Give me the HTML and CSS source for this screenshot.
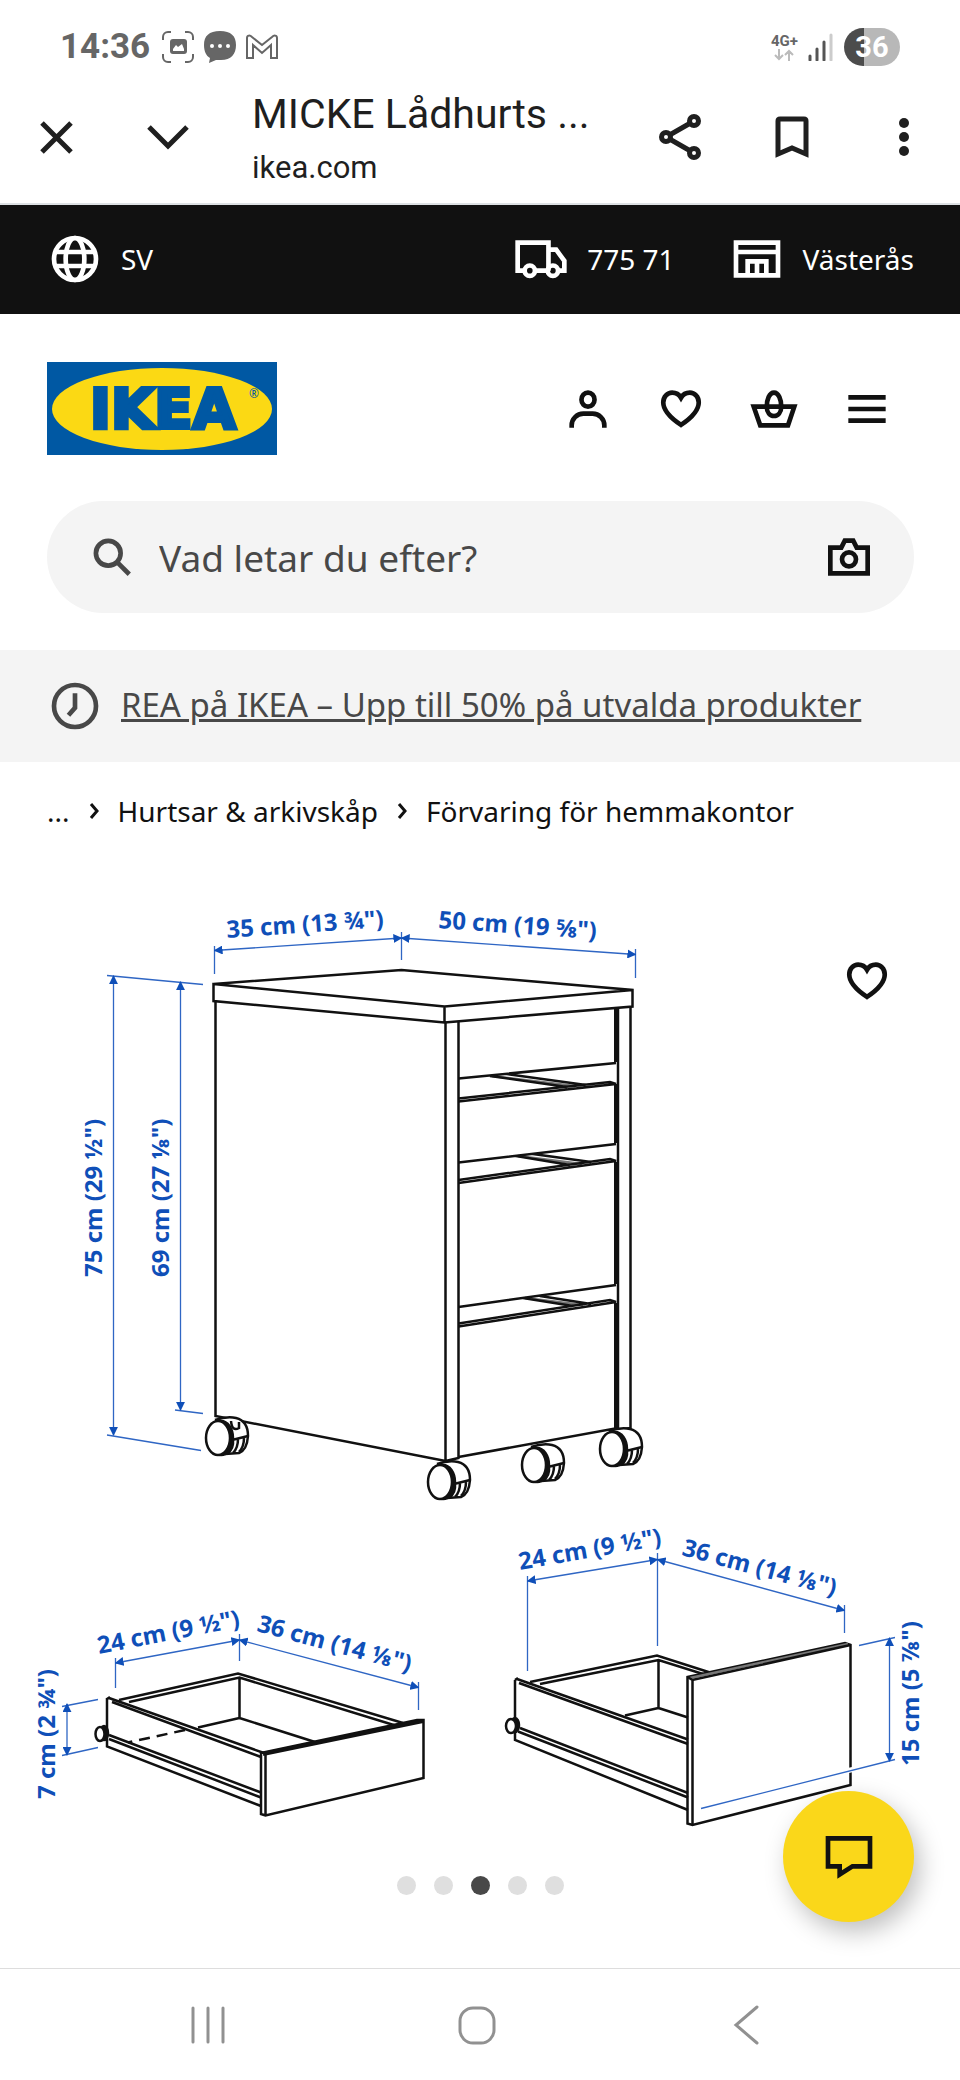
FILE: index.html
```html
<!DOCTYPE html>
<html lang="sv">
<head>
<meta charset="UTF-8">
<meta name="viewport" content="width=device-width, initial-scale=1.0">
<title>MICKE Lådhurts - IKEA</title>
<link rel="stylesheet" href="styles.css">
</head>
<body>
<div class="status-bar">
  <span class="clock">14:36</span>
  <svg class="status-icon" viewBox="0 0 32 32">
    <path class="frame" d="M1 9V6a5 5 0 0 1 5-5h3M23 1h3a5 5 0 0 1 5 5v3M31 23v3a5 5 0 0 1-5 5h-3M9 31H6a5 5 0 0 1-5-5v-3"/>
    <rect x="8" y="8" width="17" height="15" rx="3"/>
    <path class="hill" d="M11 20v-2l3-4 2 2 4-3 2 5v2z"/>
  </svg>
  <svg class="status-icon" viewBox="0 0 32 32">
    <path d="M16 0C27 0 32 5 32 14s-5 15-15 15h-5l-7 3 1-5C2 25 0 20 0 14 0 5 5 0 16 0z"/>
    <g fill="#fff"><circle cx="8" cy="15" r="2"/><circle cx="16" cy="15" r="2"/><circle cx="24" cy="15" r="2"/></g>
  </svg>
  <svg class="status-icon" viewBox="0 0 32 32">
    <path class="frame" d="M1 26V7c0-3 3-3 5-1l10 8 10-8c2-2 5-2 5 1v20h-6V14l-9 8-9-8v13H1z"/>
  </svg>
  <div class="network">
    <span>4G+</span>
    <svg viewBox="0 0 20 12"><path d="M5 0v10M1 6l4 4 4-4M15 12V2M11 6l4-4 4 4"/></svg>
  </div>
  <svg class="signal" viewBox="0 0 26 28">
    <path d="M2 27v-4M9 27V16M16 27V9"/><path class="weak" d="M23 27V2"/>
  </svg>
  <span class="battery">36</span>
</div>

<div class="browser-bar">
  <button class="icon-btn" aria-label="Stäng">
    <svg viewBox="0 0 56 56"><path d="M14 14l29 29M43 14L14 43"/></svg>
  </button>
  <button class="icon-btn" aria-label="Minimera">
    <svg viewBox="0 0 56 56"><path d="M9 18l19 19 19-19"/></svg>
  </button>
  <div class="page-info">
    <div class="page-title">MICKE Lådhurts ...</div>
    <div class="page-host">ikea.com</div>
  </div>
  <button class="icon-btn" aria-label="Dela">
    <svg viewBox="0 0 56 56"><path d="M42 12L14 28l28 16"/><g fill="#fff"><circle cx="42" cy="12" r="4.500"/><circle cx="14" cy="28" r="4.500"/><circle cx="42" cy="44" r="4.500"/></g></svg>
  </button>
  <button class="icon-btn" aria-label="Bokmärke">
    <svg viewBox="0 0 56 56"><path d="M14 45V12q0-2 2-2h24q2 0 2 2v33l-14-6z"/></svg>
  </button>
  <button class="icon-btn" aria-label="Meny">
    <svg class="solid" viewBox="0 0 56 56"><circle cx="28" cy="14" r="5"/><circle cx="28" cy="28" r="5"/><circle cx="28" cy="42" r="5"/></svg>
  </button>
</div>

<nav class="top-bar">
  <a href="#" class="top-link">
    <svg class="icon" viewBox="0 0 24 24"><circle cx="12" cy="12" r="9"/><ellipse cx="12" cy="12" rx="4" ry="9"/><path d="M4 9h16M4 15h16"/></svg>
    SV
  </a>
  <a href="#" class="top-link postcode">
    <svg class="icon" viewBox="0 0 24 24"><path d="M5 17H2V5h13.200v12M9.500 17h5.500M15.200 8h3.300l3.500 4.800V17h-2.500"/><circle cx="7.200" cy="17" r="2.200"/><circle cx="17.100" cy="17" r="2.200"/></svg>
    775 71
  </a>
  <a href="#" class="top-link">
    <svg class="icon" viewBox="0 0 24 24"><path d="M3 5h18v14H3zM3 9h18M8 19v-6h8v6M12 13v6"/></svg>
    Västerås
  </a>
</nav>

<header class="header">
  <div class="header-row">
    <a href="#" class="logo" aria-label="IKEA">
      <svg viewBox="0 0 230 93">
        <rect width="230" height="93" fill="#0058a3"/>
        <ellipse cx="115" cy="47" rx="110" ry="41" fill="#fbd914"/>
        <text class="logo-text" x="116" y="66" text-anchor="middle">IKEA</text>
        <text class="logo-mark" x="202" y="36">®</text>
      </svg>
    </a>
    <div class="header-icons">
      <button class="icon-btn" aria-label="Logga in">
        <svg class="icon" viewBox="0 0 24 24"><ellipse cx="12" cy="8" rx="2.800" ry="3"/><path d="M5 20v-1a5 5 0 0 1 5-5h4a5 5 0 0 1 5 5v1"/></svg>
      </button>
      <button class="icon-btn" aria-label="Favoriter">
        <svg class="icon" viewBox="0 0 24 24"><path d="M12 18.800C9 16.800 4.400 13 4.400 9.200 4.400 6.800 6.200 5 8.200 5c1.700 0 3 .8 3.800 2.200C12.800 5.800 14.100 5 15.800 5c2 0 3.800 1.800 3.800 4.200 0 3.800-4.600 7.600-7.600 9.600z"/></svg>
      </button>
      <button class="icon-btn" aria-label="Varukorg">
        <svg class="icon" viewBox="0 0 24 24"><path d="M3.300 11h17.400l-2.700 8H6.100z"/><path d="M12 5c2 0 3.100 3 3.100 6 0 2.500-1.400 4-3.100 4s-3.100-1.500-3.100-4c0-3 1.100-6 3.100-6z"/></svg>
      </button>
      <button class="icon-btn" aria-label="Meny">
        <svg class="icon" viewBox="0 0 24 24"><path d="M4 7h16M4 12h16M4 17h16"/></svg>
      </button>
    </div>
  </div>
  <form class="search">
    <svg class="icon" viewBox="0 0 24 24"><circle cx="10.400" cy="10.400" r="5.300"/><path d="M14.200 14.200l5.200 5.200"/></svg>
    <input type="text" placeholder="Vad letar du efter?" aria-label="Sök">
    <button type="button" class="icon-btn" aria-label="Sök med bild">
      <svg class="icon" viewBox="0 0 24 24"><path d="M4 19V8h4.700l1.500-3h3.600l1.500 3H20v11z"/><circle cx="12" cy="13" r="3"/></svg>
    </button>
  </form>
</header>

<div class="banner">
  <svg class="icon" viewBox="0 0 24 24"><circle cx="12" cy="12" r="9"/><path d="M12 6.500v6.300L9.200 16"/></svg>
  <a href="#">REA på IKEA – Upp till 50% på utvalda produkter</a>
</div>

<nav class="breadcrumb">
  <a href="#">...</a>
  <svg viewBox="0 0 10 16"><path d="M2 1l6 7-6 7"/></svg>
  <a href="#">Hurtsar &amp; arkivskåp</a>
  <svg viewBox="0 0 10 16"><path d="M2 1l6 7-6 7"/></svg>
  <a href="#">Förvaring för hemmakontor</a>
</nav>

<main class="gallery">
  <svg class="drawing" viewBox="0 850 960 1000" role="img" aria-label="Måttskiss">
    <defs>
      <marker id="arrow" viewBox="0 0 10 10" refX="9" refY="5" markerWidth="9" markerHeight="9" markerUnits="userSpaceOnUse" orient="auto-start-reverse">
        <path class="arrow" d="M0 0l10 5-10 5z"/>
      </marker>
      <g id="caster">
        <path d="M-4 -18Q8 -22 17 -20 29 -17 29 -2 28 12 20 15L6 16"/>
        <path d="M13 2L29 -2M14 2Q15 11 8 16M19 1Q19 10 14 15M25 0Q25 9 20 14"/>
        <ellipse cx="2" cy="0" rx="12" ry="17" fill="#111"/>
        <ellipse cx="-1" cy="0" rx="12" ry="17"/>
      </g>
    </defs>

    <!-- cabinet -->
    <g class="outline">
      <path d="M215.500 1001V1416L445.500 1461V1022M458.500 1021V1458L445.500 1461M630.500 1007V1428L617.500 1430M458.500 1457L618 1428V1008"/>
      <path d="M213.500 984L401.500 970 632.500 990V1006.500L444.500 1022.500 213.500 1001ZL444.500 1006.500 632.500 990M444.500 1006.500V1022.500"/>
      <path class="shade" d="M492 1076L575 1086M518 1156L582 1164M525 1298L583 1305"/>
      <path d="M458.500 1078.500L616 1063M458.500 1098.500L610 1082 616 1084 458.500 1101.500M490 1076L567 1087M507 1074L586 1085"/>
      <path d="M458.500 1162.500L616 1144M458.500 1180L610 1159 616 1161 458.500 1183M516 1156L570 1165M533 1154L591 1162"/>
      <path d="M458.500 1307L616 1285M458.500 1323.500L610 1300 616 1302 458.500 1326.500M523 1298L573 1306M540 1296L591 1304"/>
      <path class="thick" d="M616 1008V1062M616 1084V1143M616 1162V1284M616 1303V1428"/>
      <use href="#caster" x="219" y="1438"/>
      <path d="M231 1421Q232 1432 239 1428V1422"/>
      <use href="#caster" x="441" y="1482"/>
      <use href="#caster" x="535" y="1465"/>
      <use href="#caster" x="613" y="1449"/>
    </g>

    <!-- small drawer -->
    <g class="outline">
      <path d="M107 1698V1746.500L261 1806M109 1698L264 1753M112 1702L261 1757M107 1699L110 1697"/>
      <path d="M119 1700L238 1673.500 403 1723M129 1702L239.500 1677.500 397 1726M239.500 1677V1718L198 1727.500M239.500 1718L315 1742"/>
      <path stroke-dasharray="11 7" d="M185 1730L128 1742.500"/>
      <path d="M109 1735L261 1792.500M109 1739L261 1797.500"/>
      <path d="M261 1753L417 1720H423.500V1778L265.500 1815.500 261 1814ZM265.500 1755V1815"/>
      <path class="thick" d="M263 1754L423 1721"/>
      <ellipse cx="104" cy="1733" rx="4" ry="7" fill="#111"/>
      <ellipse cx="100" cy="1734" rx="4.500" ry="7"/>
    </g>

    <!-- large drawer -->
    <g class="outline">
      <path d="M515 1680V1740L688 1810M517 1679L688 1739.500M519 1683L688 1744M515 1680L518 1678"/>
      <path d="M530 1682L657 1655.500 710 1672.500M540 1684L658.500 1660 703 1674M658.500 1660V1708L625 1715.500M658.500 1708L688 1717.500"/>
      <path d="M520 1728L688 1793M518 1731.500L688 1797.500"/>
      <path d="M687.500 1677L845 1643 850.500 1645V1785L692.500 1825 687.500 1823.500Z"/>
      <path class="shade" d="M690 1678L848 1644"/>
      <path d="M687.500 1677L692.500 1680 850.500 1645M692.500 1680V1825"/>
      <ellipse cx="515" cy="1725" rx="4" ry="7" fill="#111"/>
      <ellipse cx="511" cy="1726" rx="5" ry="7"/>
      <path class="gap" d="M846 1771L855 1769"/>
    </g>

    <!-- measure lines -->
    <g class="measure">
      <path d="M214.500 946V974M401.500 932V960M635.500 949V978M107 975.500L203 984.500M175 1410L203 1413.500M107 1435L201 1450.500"/>
      <path d="M115.500 1658V1688M239.500 1634V1661M418.500 1682V1710M62 1706.500L98 1699.500M62 1755.500L98 1747.500"/>
      <path d="M527.500 1576V1671M657.500 1553V1646M844.500 1605V1633M859 1645.500L895 1637.500M701 1808.500L895 1759.500"/>
      <g class="ends">
        <path d="M214.500 950.500L401.500 938"/><path d="M401.500 938L635.500 954.500"/>
        <path d="M113.500 976V1435"/><path d="M180.500 982V1410"/>
        <path d="M115.500 1663L239.500 1640"/><path d="M239.500 1640L418.500 1687.500"/><path d="M67 1704V1755"/>
        <path d="M527.500 1581L657.500 1559.500"/><path d="M657.500 1559.500L844.500 1610.500"/><path d="M889.500 1638V1761"/>
      </g>
    </g>
    <g class="labels">
      <text transform="translate(227 938) rotate(-4)">35 cm (13 ¾")</text>
      <text transform="translate(438 928) rotate(4)">50 cm (19 ⅝")</text>
      <text transform="translate(102 1277) rotate(-90)">75 cm (29 ½")</text>
      <text transform="translate(169 1277) rotate(-90)">69 cm (27 ⅛")</text>
      <text transform="translate(99 1654) rotate(-11)">24 cm (9 ½")</text>
      <text transform="translate(256 1631) rotate(15)">36 cm (14 ⅛")</text>
      <text transform="translate(55 1799) rotate(-90)">7 cm (2 ¾")</text>
      <text transform="translate(520 1570) rotate(-10)">24 cm (9 ½")</text>
      <text transform="translate(681 1555) rotate(15)">36 cm (14 ⅛")</text>
      <text transform="translate(919 1766) rotate(-90)">15 cm (5 ⅞")</text>
    </g>
  </svg>
  <button class="icon-btn favourite" aria-label="Spara som favorit">
    <svg class="icon" viewBox="0 0 24 24"><path d="M12 18.800C9 16.800 4.400 13 4.400 9.200 4.400 6.800 6.200 5 8.200 5c1.700 0 3 .8 3.800 2.200C12.800 5.800 14.100 5 15.800 5c2 0 3.800 1.800 3.800 4.200 0 3.800-4.600 7.600-7.600 9.600z"/></svg>
  </button>
  <div class="dots">
    <span class="dot"></span>
    <span class="dot"></span>
    <span class="dot active"></span>
    <span class="dot"></span>
    <span class="dot"></span>
  </div>
  <button class="chat-btn" aria-label="Chatt">
    <svg class="icon" viewBox="0 0 24 24"><path d="M3 4h18v12h-7.500L8 19.500V16H3z"/></svg>
  </button>
</main>

<div class="system-nav">
  <button aria-label="Senaste appar"><svg viewBox="0 0 40 40"><path d="M5 3v34M20 3v34M35 3v34"/></svg></button>
  <button aria-label="Hem"><svg viewBox="0 0 40 40"><rect x="3" y="3" width="34" height="35" rx="13"/></svg></button>
  <button aria-label="Tillbaka"><svg viewBox="0 0 40 40"><path d="M31 2L10 20l21 18"/></svg></button>
</div>
</body>
</html>
```

FILE: styles.css
```css
* {
  box-sizing: border-box;
}
body {
  margin: 0;
  background-color: #fff;
  color: #111;
  font-family: "Noto Sans", sans-serif;
  font-size: 28px;
}
a {
  color: inherit;
  text-decoration: none;
}
button {
  padding: 0;
  border: none;
  background: none;
  color: inherit;
  cursor: pointer;
}
svg {
  display: block;
  flex: none;
}

/* icons */
.icon {
  width: 56px;
  height: 56px;
  fill: none;
  stroke: currentColor;
  stroke-width: 2;
}
.icon-btn {
  flex: none;
  width: 56px;
  height: 56px;
}

/* status bar */
.status-bar {
  display: flex;
  align-items: center;
  gap: 10px;
  height: 71px;
  padding: 22px 60px 0 60px;
  color: #666;
  font-family: Roboto, sans-serif;
  font-weight: bold;
}
.clock {
  margin-right: 2px;
  font-size: 35px;
}
.status-icon {
  width: 32px;
  height: 32px;
  fill: #666;
}
.status-icon .frame {
  fill: none;
  stroke: #666;
  stroke-width: 2;
}
.status-icon .hill {
  fill: #fff;
}
.network {
  display: flex;
  flex-direction: column;
  align-items: center;
  margin-left: auto;
  font-size: 15px;
  line-height: 16px;
}
.network svg {
  width: 20px;
  height: 12px;
  fill: none;
  stroke: #bbb;
  stroke-width: 2;
}
.signal {
  width: 26px;
  height: 28px;
  stroke: #555;
  stroke-width: 3;
  stroke-linecap: round;
}
.signal .weak {
  stroke: #ccc;
}
.battery {
  width: 56px;
  height: 38px;
  border-radius: 19px;
  background: linear-gradient(to right, #4c4c4c 36%, #b8b8b8 36%);
  color: #fff;
  font-size: 29px;
  line-height: 38px;
  text-align: center;
}

/* browser toolbar */
.browser-bar {
  display: flex;
  align-items: center;
  gap: 56px;
  height: 134px;
  padding: 0 28px;
  border-bottom: 2px solid #dde1e4;
  font-family: Roboto, sans-serif;
}
.browser-bar svg {
  width: 56px;
  height: 56px;
  fill: none;
  stroke: #1f1f1f;
  stroke-width: 5;
}
.browser-bar .solid {
  fill: #1f1f1f;
  stroke: none;
}
.page-info {
  flex: 1;
  min-width: 0;
  padding-top: 6px;
  color: #1f1f1f;
  white-space: nowrap;
}
.page-title {
  font-size: 41px;
  line-height: 56px;
}
.page-host {
  font-size: 31px;
  line-height: 52px;
}

/* black bar */
.top-bar {
  display: flex;
  align-items: center;
  gap: 54px;
  height: 109px;
  padding: 0 46px 2px 47px;
  background-color: #111;
  color: #fff;
}
.top-link {
  display: flex;
  align-items: center;
  gap: 18px;
}
.postcode {
  margin-left: auto;
}

/* header */
.header {
  padding: 48px 46px 37px 47px;
}
.header-row {
  display: flex;
  align-items: center;
  justify-content: space-between;
  margin-bottom: 46px;
}
.logo svg {
  width: 230px;
  height: 93px;
}
.logo-text {
  fill: #0058a3;
  stroke: #0058a3;
  stroke-width: 4;
  font-family: "DejaVu Sans", sans-serif;
  font-size: 56px;
  font-weight: bold;
}
.logo-mark {
  fill: #0058a3;
  font-size: 12px;
}
.header-icons {
  display: flex;
  gap: 37px;
  padding-right: 19px;
}
.search {
  display: flex;
  align-items: center;
  gap: 19px;
  height: 112px;
  padding: 0 37px;
  border-radius: 56px;
  background-color: #f4f4f4;
}
.search > .icon {
  color: #484848;
}
.search input {
  flex: 1;
  min-width: 0;
  padding: 0;
  border: none;
  outline: none;
  background: none;
  color: #484848;
  font-family: inherit;
  font-size: 37px;
}
.search input::placeholder {
  color: #484848;
  opacity: 1;
}

/* sale banner */
.banner {
  display: flex;
  align-items: center;
  gap: 18px;
  height: 112px;
  padding: 0 47px;
  background-color: #f4f4f4;
  color: #484848;
  font-size: 33px;
}
.banner a {
  padding-bottom: 4px;
  text-decoration: underline;
}

.breadcrumb {
  display: flex;
  align-items: center;
  gap: 19px;
  padding: 30px 47px 20px;
  line-height: 38px;
}
.breadcrumb svg {
  width: 10px;
  height: 16px;
  fill: none;
  stroke: #111;
  stroke-width: 3;
}

/* product picture */
.gallery {
  position: relative;
  padding-bottom: 73px;
}
.drawing {
  width: 100%;
}
.outline {
  fill: #fff;
  stroke: #111;
  stroke-width: 2.5;
}
.outline path {
  fill: none;
}
.outline .thick {
  stroke-width: 4;
}
.outline .shade {
  stroke: #777;
}
.outline .gap {
  stroke: #fff;
  stroke-width: 5;
}
.measure {
  fill: none;
  stroke: #2f66c4;
  stroke-width: 1.3;
}
.measure .ends path {
  marker-start: url(#arrow);
  marker-end: url(#arrow);
}
.arrow {
  fill: #0f4fb8;
  stroke: none;
}
.labels {
  fill: #0f4fb8;
  font-size: 24px;
  font-weight: bold;
}
.favourite {
  position: absolute;
  top: 103px;
  right: 65px;
}
.dots {
  display: flex;
  justify-content: center;
  gap: 18px;
  margin-top: 26px;
}
.dot {
  width: 19px;
  height: 19px;
  border-radius: 50%;
  background-color: #dfdfdf;
}
.dot.active {
  background-color: #484848;
}
.chat-btn {
  position: absolute;
  right: 46px;
  bottom: 46px;
  display: flex;
  align-items: center;
  justify-content: center;
  width: 131px;
  height: 131px;
  border-radius: 50%;
  background-color: #fad71a;
  box-shadow: 6px 10px 24px rgba(0, 0, 0, 0.25);
}

/* android buttons */
.system-nav {
  display: grid;
  grid-template-columns: repeat(3, 1fr);
  align-items: center;
  height: 112px;
  padding: 0 80px 0 73px;
  border-top: 1px solid #ddd;
}
.system-nav button {
  justify-self: center;
}
.system-nav svg {
  width: 40px;
  height: 40px;
  fill: none;
  stroke: #919191;
  stroke-width: 3;
  stroke-linecap: round;
}
```
